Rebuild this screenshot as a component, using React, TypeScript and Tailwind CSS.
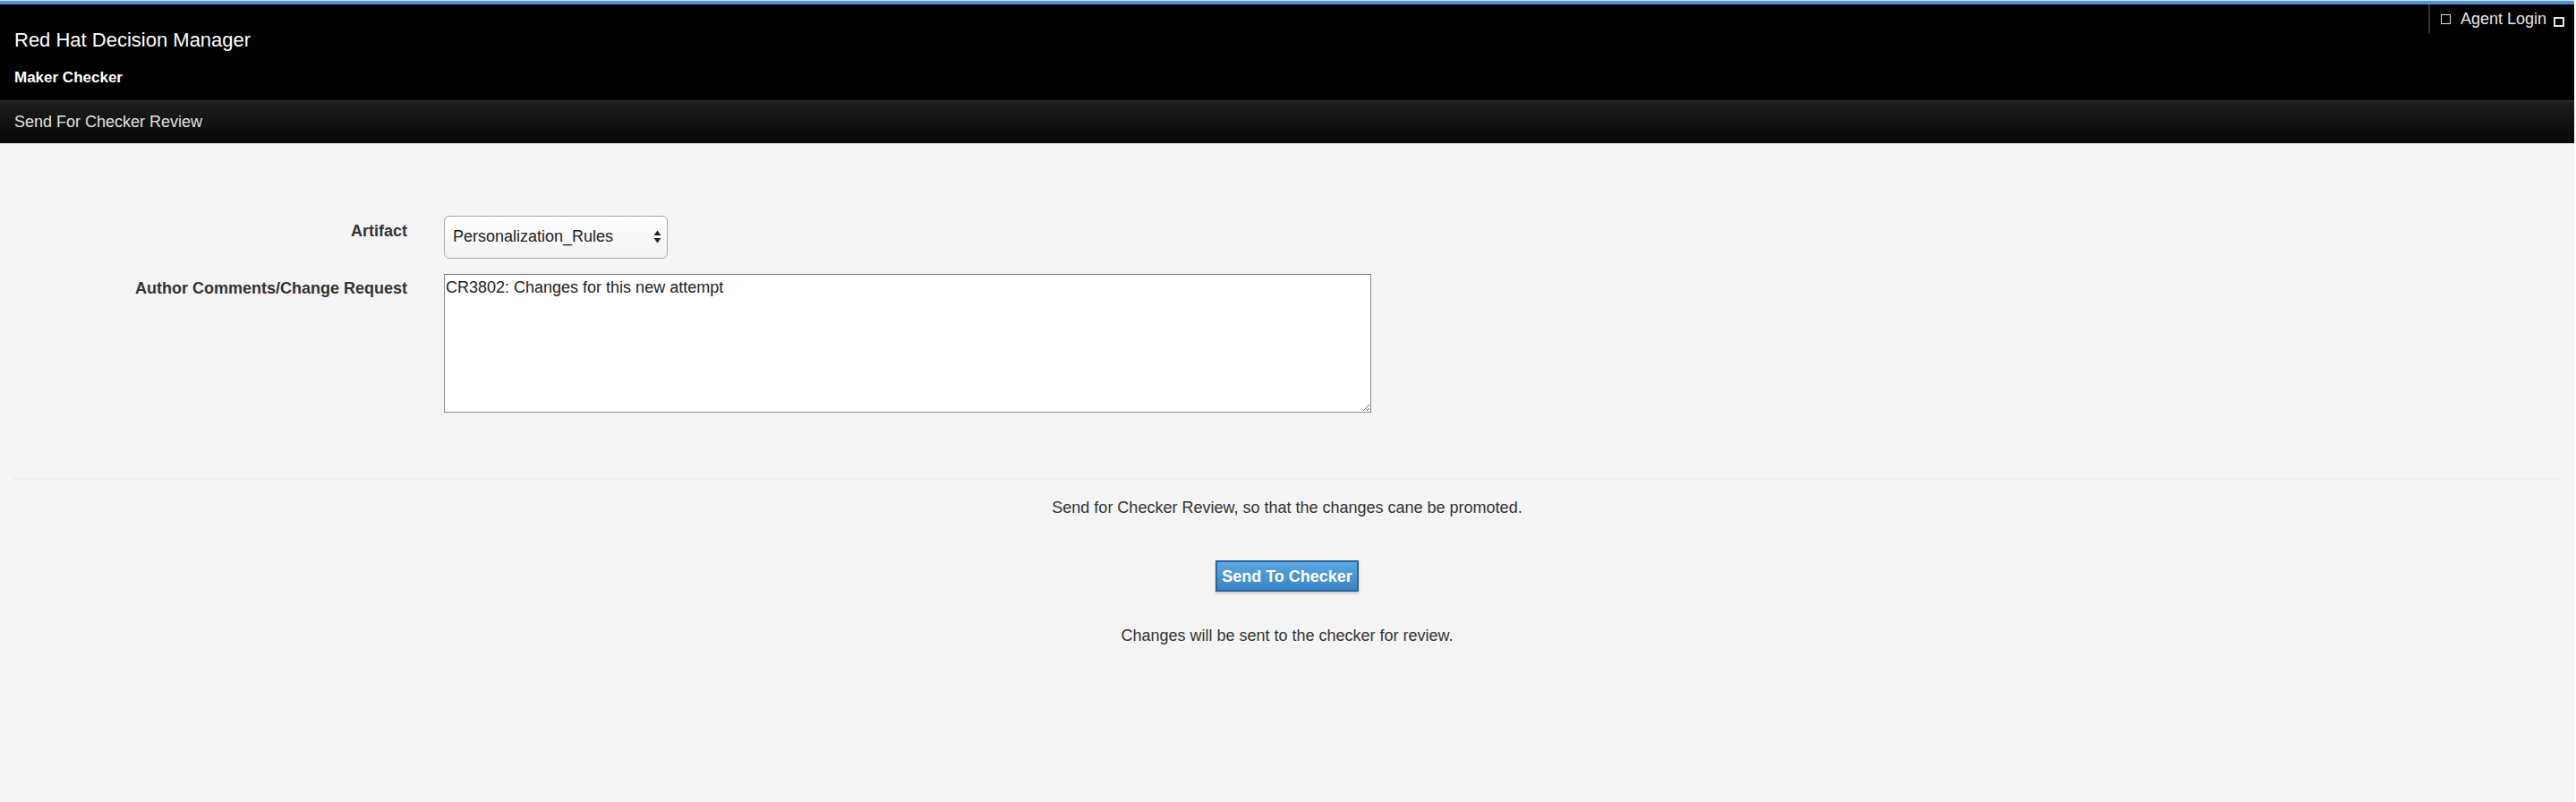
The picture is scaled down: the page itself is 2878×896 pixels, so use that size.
import { useState } from "react";

export default function App() {
    const [artifact, setArtifact] = useState("Personalization_Rules");
    const [comments, setComments] = useState("CR3802: Changes for this new attempt");

    return (
        <div className="flex min-h-[896px] w-full bg-white font-['Liberation_Sans',Arial,sans-serif]">
            <div className="flex flex-1 flex-col bg-[#f4f4f4]">
                {/* Top accent line */}
                <div className="h-px bg-[#cfe0f0]" />
                <div className="h-[4px] bg-[#4f93cf]" />

                {/* Header */}
                <div className="relative h-[107px] bg-black px-[16px] pt-[27px]">
                    <h1 className="text-[22px] leading-[26px] font-normal text-white">Red Hat Decision Manager</h1>
                    <p className="mt-[19px] text-[17px] leading-[20px] font-bold text-white">Maker Checker</p>

                    <div className="absolute top-0 right-0 flex h-[32px] items-center border-l-2 border-[#333] pr-[11px] pl-[12px] text-[18px] text-[#e6e6e6]">
                        <span className="mr-[11px] h-[11px] w-[11px] border border-[#dddddd]" />
                        <span className="leading-[20px]">Agent Login</span>
                        <span className="mt-[6px] ml-[8px] h-[11px] w-[12px] border-2 border-[#e6e6e6]" />
                    </div>
                </div>

                {/* Sub navigation bar */}
                <div className="h-[48px] border-t border-[#333] bg-gradient-to-b from-[#1f1f1f] to-[#070707] px-[16px]">
                    <span className="text-[18px] leading-[47px] text-[#e0e0e0]">Send For Checker Review</span>
                </div>

                {/* Form */}
                <div className="pt-[81px] text-[#333]">
                    <div className="grid grid-cols-[455px_1fr] gap-x-[41px] gap-y-[17px]">
                        <label className="pt-[7px] text-right text-[18px] leading-[20px] font-bold">Artifact</label>
                        <div className="relative h-[48px] w-[250px]">
                            <select
                                value={artifact}
                                onChange={(e) => setArtifact(e.target.value)}
                                className="h-full w-full appearance-none rounded-[6px] border border-[#a9a9a9] bg-gradient-to-b from-[#ffffff] to-[#f2f2f2] pb-[2px] pl-[9px] text-[18px] text-[#222] outline-none"
                            >
                                <option>Personalization_Rules</option>
                            </select>
                            <svg className="pointer-events-none absolute top-[16px] right-[7px]" width="9" height="15" viewBox="0 0 9 15">
                                <path d="M4.5 0.5 L8.5 6 L0.5 6 Z" fill="#222" />
                                <path d="M0.5 9 L8.5 9 L4.5 14.5 Z" fill="#222" />
                            </svg>
                        </div>

                        <label className="pt-[6px] text-right text-[18px] leading-[20px] font-bold">Author Comments/Change Request</label>
                        <textarea
                            value={comments}
                            onChange={(e) => setComments(e.target.value)}
                            className="h-[155px] w-[1036px] border border-[#8a8a8a] border-t-[#6f6f6f] bg-white px-[1px] pt-[4px] text-[18px] leading-[21px] text-[#222] outline-none"
                        />
                    </div>
                </div>

                {/* Actions */}
                <div className="mx-[15px] mt-[73px] h-[2px] bg-[#ececec]" />
                <div className="flex flex-col items-center pt-[21px] text-[18px] leading-[20px] text-[#333]">
                    <p>Send for Checker Review, so that the changes cane be promoted.</p>
                    <button className="mt-[49px] h-[35px] border-2 border-[#2c6599] bg-gradient-to-b from-[#5aa6e2] to-[#3a85c7] px-[5px] text-[18px] leading-[20px] font-bold text-white shadow-[0_2px_3px_rgba(0,0,0,0.18)]">
                        Send To Checker
                    </button>
                    <p className="mt-[39px]">Changes will be sent to the checker for review.</p>
                </div>
            </div>
            <div className="w-[2px] bg-white" />
        </div>
    );
}
